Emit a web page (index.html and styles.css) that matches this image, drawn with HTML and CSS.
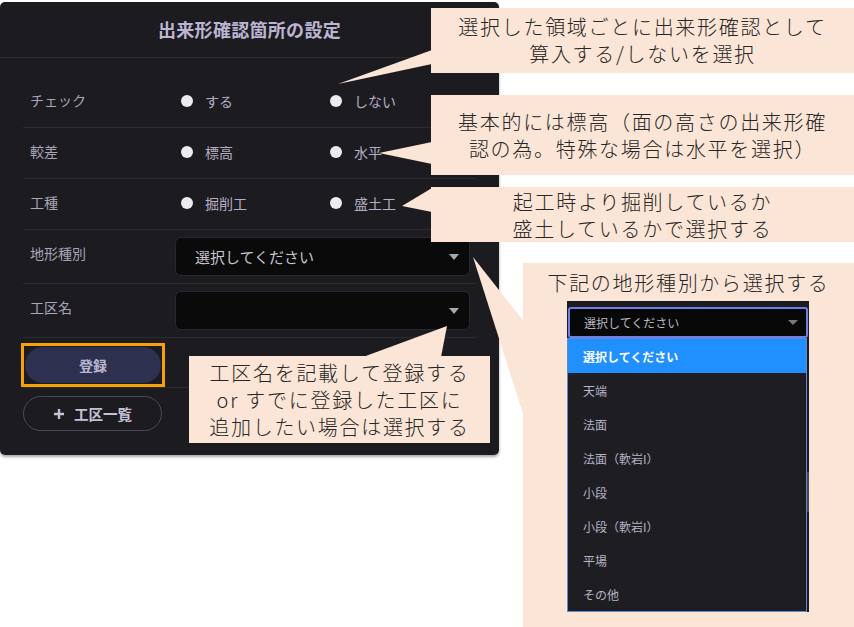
FILE: index.html
```html
<!DOCTYPE html>
<html lang="ja">
<head>
    <meta charset="UTF-8">
    <meta name="viewport" content="width=device-width, initial-scale=1.0">
    <title>出来形確認箇所の設定</title>
    <link rel="stylesheet" href="styles.css">
</head>
<body>
    <div class="stage">
        <div class="panel">
            <div class="panel-header">出来形確認箇所の設定</div>
            <div class="panel-body">
                <div class="row row-first">
                    <div class="row-label">チェック</div>
                    <div class="radios">
                        <label class="radio"><span class="dot"></span>する</label>
                        <label class="radio"><span class="dot"></span>しない</label>
                    </div>
                </div>
                <div class="row">
                    <div class="row-label">較差</div>
                    <div class="radios">
                        <label class="radio"><span class="dot"></span>標高</label>
                        <label class="radio"><span class="dot"></span>水平</label>
                    </div>
                </div>
                <div class="row">
                    <div class="row-label">工種</div>
                    <div class="radios">
                        <label class="radio"><span class="dot"></span>掘削工</label>
                        <label class="radio"><span class="dot"></span>盛土工</label>
                    </div>
                </div>
                <div class="row row-select">
                    <div class="row-label">地形種別</div>
                    <div class="select"><span>選択してください</span><span class="caret"></span></div>
                </div>
                <div class="row row-select">
                    <div class="row-label">工区名</div>
                    <div class="select"><span></span><span class="caret"></span></div>
                </div>
                <div class="row row-btn">
                    <div class="mark">
                        <button class="btn-primary">登録</button>
                    </div>
                </div>
                <div class="row-last">
                    <button class="btn-ghost">
                        <svg width="12" height="12" viewBox="0 0 12 12"><path d="M6 1v10M1 6h10" stroke="#c5c1d4" stroke-width="2.4"/></svg>
                        工区一覧
                    </button>
                </div>
            </div>
        </div>

        <svg class="pointers" width="854" height="627" viewBox="0 0 854 627">
            <polygon points="432,50 338,84 432,64" />
            <polygon points="432,142 379,153 432,164" />
            <polygon points="432,188 402,206 432,212" />
            <polygon points="473,257 525,323 525,420" />
            <polygon points="363,357 447,326 441,357" />
        </svg>

        <div class="note note-1">選択した領域ごとに出来形確認として<br>算入する/しないを選択</div>
        <div class="note note-2">基本的には標高（面の高さの出来形確<br>認の為。特殊な場合は水平を選択）</div>
        <div class="note note-3">起工時より掘削しているか<br>盛土しているかで選択する</div>
        <div class="note note-4">
            <div class="note-title">下記の地形種別から選択する</div>
            <div class="dropdown">
                <div class="dd-select"><span>選択してください</span><span class="dd-caret"></span></div>
                <div class="dd-wrap">
                    <ul class="dd-list">
                        <li class="active">選択してください</li>
                        <li>天端</li>
                        <li>法面</li>
                        <li>法面（軟岩I）</li>
                        <li>小段</li>
                        <li>小段（軟岩I）</li>
                        <li>平場</li>
                        <li>その他</li>
                    </ul>
                    <div class="dd-scroll"><div class="dd-thumb"></div></div>
                </div>
            </div>
        </div>
        <div class="note note-5">工区名を記載して登録する<br>or すでに登録した工区に<br>追加したい場合は選択する</div>
    </div>
</body>
</html>
```

FILE: styles.css
```css
body {
    margin: 0;
    background-color: #fff;
    font-family: "Noto Sans CJK JP", "Noto Sans", sans-serif;
}
.stage {
    position: relative;
    width: 854px;
    height: 627px;
    overflow: hidden;
}
.panel {
    width: 499px;
    margin-top: 2px;
    background-color: #1c1b20;
    border-radius: 5px;
    box-shadow: 0 2px 3px rgba(0, 0, 0, 0.35);
}
.panel-header {
    height: 56px;
    padding-bottom: 2px;
    box-sizing: border-box;
    display: flex;
    align-items: center;
    justify-content: center;
    border-bottom: 1px solid #2c2b31;
    color: #bcb5d2;
    font-size: 18px;
    font-weight: bold;
    letter-spacing: 0.3px;
}
.panel-body {
    padding: 18px 22px 24px 23px;
}
.row {
    box-sizing: border-box;
    height: 51px;
    display: grid;
    grid-template-columns: 145px 1fr;
    align-items: center;
    padding: 0 7px;
    border-bottom: 1px solid #2c2b31;
}
.row-first {
    height: 52px;
}
.row-select {
    height: 54px;
}
.row-label {
    margin-bottom: 4px;
    color: #a9a4b7;
    font-size: 14px;
}
.row-select .row-label {
    margin-bottom: 7px;
}
.radios {
    display: flex;
    padding-left: 6px;
    margin-bottom: 2px;
}
.radio {
    width: 149px;
    display: flex;
    align-items: center;
    gap: 12px;
    color: #b3aec3;
    font-size: 14px;
}
.dot {
    width: 12px;
    height: 12px;
    border-radius: 50%;
    background-color: #ececec;
}
.select {
    box-sizing: border-box;
    height: 39px;
    display: flex;
    align-items: center;
    justify-content: space-between;
    padding: 0 10px 0 19px;
    border: 1px solid #29282e;
    border-radius: 6px;
    background-color: #0a0a0b;
    color: #c8c4d0;
    font-size: 15px;
}
.caret {
    width: 0;
    height: 0;
    border-left: 5px solid transparent;
    border-right: 5px solid transparent;
    border-top: 6px solid #a9a9ad;
}
.row-btn {
    display: block;
    height: 50px;
    padding: 5px 0 0 0;
}
.mark {
    display: inline-block;
    margin-left: -2px;
    padding: 1px;
    border: 3px solid #f6a10a;
}
.btn-primary {
    display: block;
    width: 136px;
    height: 36px;
    padding-bottom: 2px;
    border: none;
    border-radius: 18px;
    background-color: #2e3050;
    color: #bab6cf;
    font-family: inherit;
    font-size: 14px;
    font-weight: bold;
}
.row-last {
    padding-top: 8px;
}
.btn-ghost {
    box-sizing: border-box;
    width: 139px;
    height: 35px;
    display: flex;
    align-items: center;
    justify-content: center;
    gap: 9px;
    border: 1.5px solid #4a495c;
    border-radius: 18px;
    background: transparent;
    color: #c5c1d4;
    font-family: inherit;
    font-size: 14.5px;
    font-weight: bold;
}

/* annotations */
.pointers {
    position: absolute;
    top: 0;
    left: 0;
    fill: #fbe5d6;
}
.note {
    position: absolute;
    box-sizing: border-box;
    display: flex;
    flex-direction: column;
    justify-content: center;
    background-color: #fbe5d6;
    color: #262626;
    font-size: 20px;
    font-weight: 300;
    letter-spacing: 1.7px;
    text-align: center;
    line-height: 27px;
}
.note-1 {
    left: 431px;
    top: 8px;
    width: 423px;
    height: 65px;
    padding-bottom: 1px;
}
.note-2 {
    left: 431px;
    top: 95px;
    width: 423px;
    height: 80px;
}
.note-3 {
    left: 431px;
    top: 187px;
    width: 423px;
    height: 55px;
}
.note-4 {
    left: 523px;
    top: 263px;
    width: 331px;
    height: 364px;
    justify-content: flex-start;
    padding-top: 7px;
    line-height: 26px;
}
.note-5 {
    left: 189px;
    top: 356px;
    width: 301px;
    height: 87px;
}
.dropdown {
    width: 242px;
    margin: 5px 0 0 44px;
    padding-top: 6px;
    background-color: #1c1b20;
    text-align: left;
    letter-spacing: 0;
    font-size: 12px;
    font-weight: normal;
    line-height: normal;
}
.dd-select {
    box-sizing: border-box;
    height: 31px;
    margin: 0 1px;
    display: flex;
    align-items: center;
    justify-content: space-between;
    padding: 0 8px 0 14px;
    border: 2px solid #6f7fe6;
    border-radius: 3px;
    background-color: #080808;
    color: #b8b6c2;
}
.dd-caret {
    width: 0;
    height: 0;
    border-left: 5px solid transparent;
    border-right: 5px solid transparent;
    border-top: 5px solid #77777c;
}
.dd-wrap {
    display: flex;
}
.dd-list {
    list-style-type: none;
    margin: 0;
    padding: 0;
    width: 240px;
    border: 1px solid #5b8bd0;
    background-color: #1e1d22;
}
.dd-list li {
    height: 34px;
    display: flex;
    align-items: center;
    padding-left: 15px;
    color: #b7b3c5;
}
.dd-list li.active {
    background-color: #2090ff;
    color: #fff;
    font-weight: bold;
}
.dd-scroll {
    width: 2px;
    padding-top: 134px;
}
.dd-thumb {
    height: 40px;
    background-color: #4a4950;
}
```
